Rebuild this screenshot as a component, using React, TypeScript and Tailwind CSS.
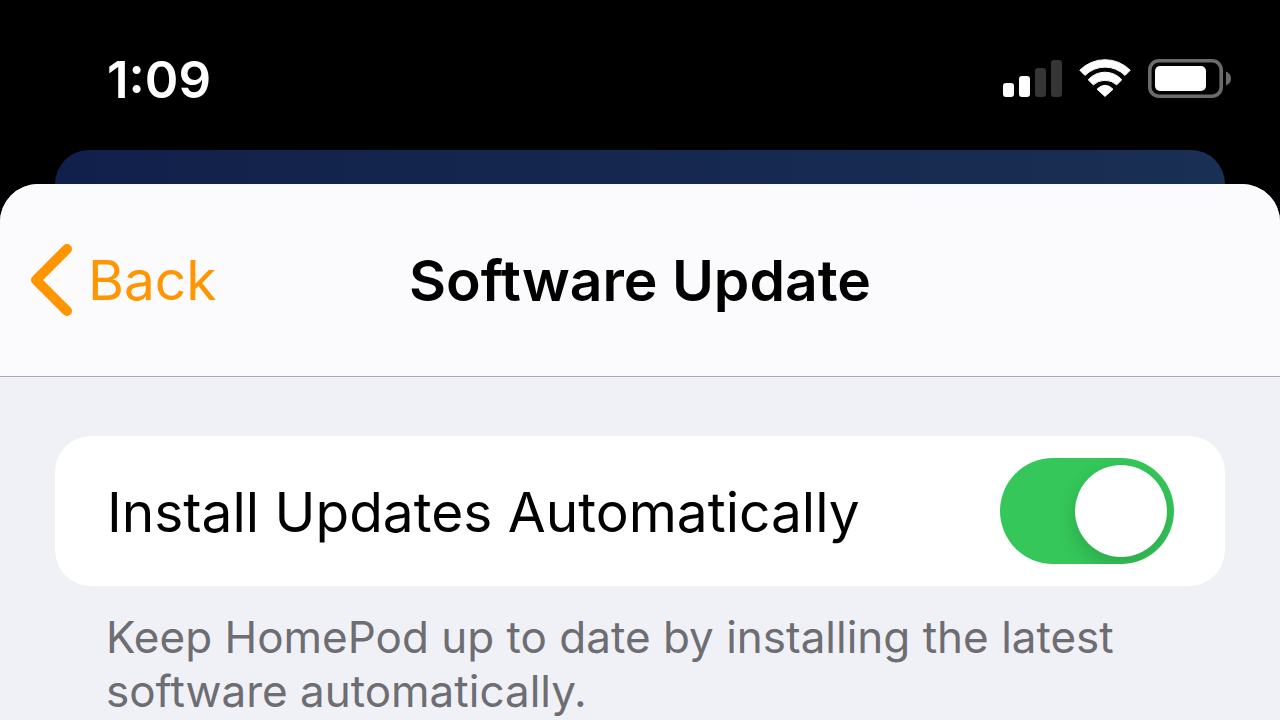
import { useState } from "react";

function CellularIcon() {
  return (
    <svg width="59" height="37" viewBox="0 0 59 37" aria-hidden="true">
      <rect x="0" y="23" width="11" height="14" rx="3" fill="#fff" />
      <rect x="16" y="16" width="11" height="21" rx="3" fill="#fff" />
      <rect x="32" y="8" width="11" height="29" rx="3" fill="#353535" />
      <rect x="48" y="0" width="11" height="37" rx="3" fill="#353535" />
    </svg>
  );
}

function WifiIcon() {
  return (
    <svg width="52" height="38" viewBox="0 0 52 38" fill="#fff" stroke="#fff" strokeLinejoin="round" aria-hidden="true">
      <path d="M.8 11.2A35.5 35.5 0 0 1 51.2 11.2L46 16.4A28.3 28.3 0 0 0 6 16.4Z" />
      <path d="M9.2 20.8A22.4 22.4 0 0 1 42.8 20.8L37.7 25.8A17.4 17.4 0 0 0 14.3 25.8Z" />
      <path d="M18 30.2Q26 22.4 34 30.2L26 37.4Z" />
    </svg>
  );
}

function BatteryIcon() {
  return (
    <svg width="83" height="39" viewBox="0 0 83 39" aria-hidden="true">
      <rect x="1.8" y="1.8" width="71.4" height="35.4" rx="9" fill="none" stroke="#6b6b6b" strokeWidth="3.6" />
      <rect x="7" y="7" width="51" height="25" rx="5" fill="#fff" />
      <path d="M78 12.5Q83 14.5 83 19.5T78 26.5Z" fill="#6b6b6b" />
    </svg>
  );
}

function StatusBar() {
  return (
    <div className="flex h-[150px] items-center justify-between pt-1.5 pr-[49px] pl-[107px] text-white">
      <time className="pt-0.5 text-[51px] leading-none font-semibold">1:09</time>
      <div className="flex items-center gap-[17px]">
        <CellularIcon />
        <WifiIcon />
        <BatteryIcon />
      </div>
    </div>
  );
}

function NavBar() {
  return (
    <header className="grid h-[193px] grid-cols-[1fr_auto_1fr] items-center border-b border-[#a9a9ae] bg-[#fbfbfd] px-[30px]">
      <button type="button" className="flex items-center gap-4 justify-self-start text-[55px] leading-none text-[#ff9500]">
        <svg width="42" height="72" viewBox="0 0 42 72" fill="none" aria-hidden="true">
          <path d="M37 5L6 36L37 67" stroke="currentColor" strokeWidth="10" strokeLinecap="round" strokeLinejoin="round" />
        </svg>
        Back
      </button>
      <h1 className="text-[57px] leading-none font-semibold text-black">Software Update</h1>
    </header>
  );
}

export default function App() {
  const [autoInstall, setAutoInstall] = useState(true);

  return (
    <div className="flex min-h-screen flex-col bg-black font-['Inter',sans-serif]">
      <StatusBar />
      <div className="mx-[55px] h-[34px] rounded-t-[34px] bg-linear-to-r from-[#11204a] to-[#1a2f54]" />

      <div className="flex-1 overflow-hidden rounded-t-[38px] bg-[#f0f1f6]">
        <NavBar />
        <main className="px-[55px] pt-[59px]">
          <div className="flex h-[150px] items-center justify-between rounded-[36px] bg-white pr-[51px] pl-[52px]">
            <label htmlFor="auto-install" className="pt-0.5 text-[55px] leading-none text-black">
              Install Updates Automatically
            </label>
            <input
              id="auto-install"
              type="checkbox"
              role="switch"
              checked={autoInstall}
              onChange={(e) => setAutoInstall(e.target.checked)}
              className="flex h-[106px] w-[174px] shrink-0 appearance-none items-center overflow-hidden rounded-full bg-[#e9e9ea] px-[7px] before:size-[92px] before:rounded-full before:bg-white before:shadow-[0_8px_20px_rgba(0,0,0,0.16)] checked:justify-end checked:bg-[#35c759]"
            />
          </div>
          <p className="px-[51px] pt-6 text-[44px] leading-[54px] text-[#6d6d72]">
            Keep HomePod up to date by installing the latest software automatically.
          </p>
        </main>
      </div>
    </div>
  );
}
